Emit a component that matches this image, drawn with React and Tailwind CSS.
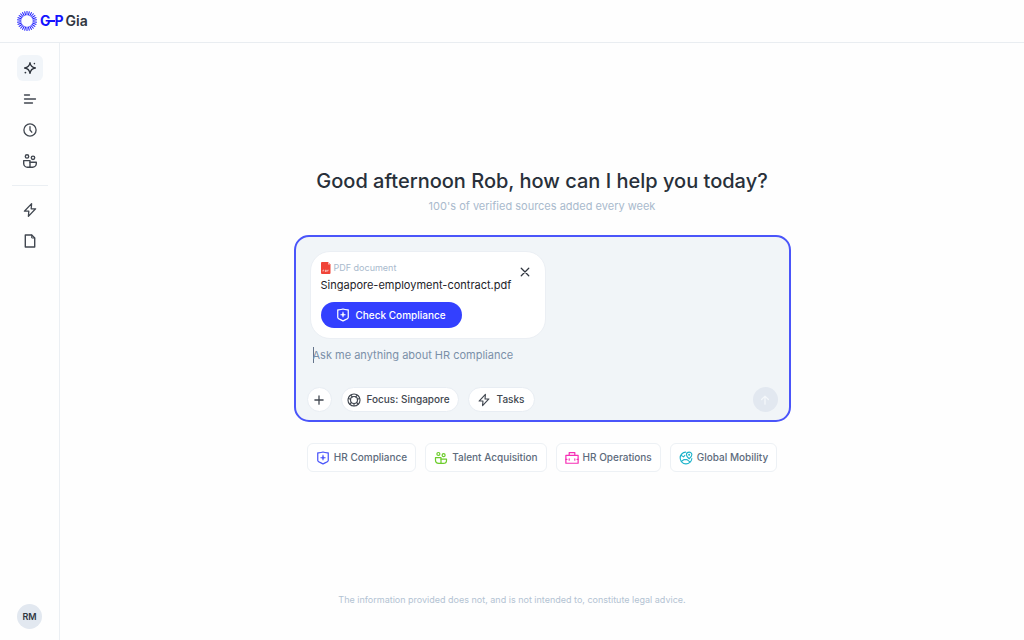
import { useState } from 'react'

const stroke = {
    fill: 'none',
    stroke: 'currentColor',
    strokeWidth: 1.5,
    strokeLinecap: 'round',
    strokeLinejoin: 'round',
    'aria-hidden': true,
}

function SparkIcon({ className }) {
    return (
        <svg viewBox="0 0 16 16" className={className} {...stroke} strokeWidth="1.3">
            <path d="M8 2.6C8.5 6 10 7.5 13.4 8C10 8.5 8.5 10 8 13.4C7.5 10 6 8.5 2.6 8C6 7.5 7.5 6 8 2.6Z" />
            <circle cx="12.4" cy="3.6" r=".8" fill="currentColor" stroke="none" />
            <circle cx="3.4" cy="12.6" r=".9" fill="currentColor" stroke="none" />
        </svg>
    )
}

function LinesIcon({ className }) {
    return (
        <svg viewBox="0 0 16 16" className={className} {...stroke} strokeWidth="1.3">
            <path d="M2.5 4h5M2.5 8h11M2.5 12h8" />
        </svg>
    )
}

function ClockIcon({ className }) {
    return (
        <svg viewBox="0 0 16 16" className={className} {...stroke} strokeWidth="1.3">
            <circle cx="8" cy="8" r="6.1" />
            <path d="M8 4.6V8l1.8 2.2" />
        </svg>
    )
}

function PeopleIcon({ className }) {
    return (
        <svg viewBox="0 0 16 16" className={className} {...stroke} strokeWidth="1.4">
            <circle cx="5" cy="3.4" r="1.7" />
            <circle cx="11" cy="4.8" r="1.7" />
            <path d="M8 7.6H1.7v2.8A3.8 3.8 0 0 0 5.5 14.2H8z" />
            <path d="M8 9.3h6.3v1.2a3.7 3.7 0 0 1-3.7 3.7H8" />
        </svg>
    )
}

function BoltIcon({ className }) {
    return (
        <svg viewBox="0 0 16 16" className={className} {...stroke} strokeWidth="1.3">
            <path d="M9.6 1.6L2.4 9.2h4.4L6.4 14.4l7.2-7.6H9.2z" />
        </svg>
    )
}

function FileIcon({ className }) {
    return (
        <svg viewBox="0 0 16 16" className={className} {...stroke} strokeWidth="1.4">
            <path d="M3.3 2h6.4l3 3v9H3.3z" />
            <path d="M9.7 2v3h3" strokeWidth="1" />
        </svg>
    )
}

function ShieldIcon({ className }) {
    return (
        <svg viewBox="0 0 16 16" className={className} {...stroke} strokeWidth="1.4">
            <path d="M8 1.2c-1.8.7-4 .9-6 .8v8.800c0 1.700 3 2.200 6 4 3-1.800 6-2.300 6-4V2c-2 .1-4.200-.1-6-.8z" />
            <path d="M8 4.800c.3 2 .9 2.600 2.900 2.900C8.900 8 8.300 8.600 8 10.600 7.700 8.600 7.100 8 5.100 7.700 7.100 7.400 7.700 6.800 8 4.800z" fill="currentColor" strokeWidth=".6" />
        </svg>
    )
}

function FocusIcon({ className }) {
    return (
        <svg viewBox="0 0 16 16" className={className} {...stroke} strokeWidth="1.3">
            <circle cx="8" cy="8" r="6.9" />
            <circle cx="8" cy="8" r="4" />
            <path d="M6.200 4.400L4.300 2.600M9.800 4.400l1.900-1.800M11.900 7.200l2.500-.9M10.900 10.800l1.700 2M8 12v2.500M5.100 10.800l-1.700 2M4.100 7.200l-2.500-.9" />
        </svg>
    )
}

function CaseIcon({ className }) {
    return (
        <svg viewBox="0 0 16 16" className={className} {...stroke} strokeWidth="1.4">
            <path d="M1 5h14v9H1zM4.800 5V1.800h6.400V5" />
            <path d="M1 9.600h1.200M13.800 9.600H15M4.800 8.800v1.700M11.200 8.800v1.700" strokeWidth="1.3" />
        </svg>
    )
}

function GlobeIcon({ className }) {
    return (
        <svg viewBox="0 0 16 16" className={className} {...stroke} strokeWidth="1.3">
            <path d="M7.600 1.300A6.700 6.700 0 1 0 14.700 8.600" />
            <path d="M11.600 8.900c-2-1.700-3.100-3-3.100-4.500a3.100 3.100 0 0 1 6.200 0c0 1.500-1.100 2.800-3.100 4.500z" />
            <circle cx="11.600" cy="4.300" r=".5" />
            <path d="M2.300 4.900l2.900 1.800 1.500-1.600M2.600 12l3.200-2.200h3.400l3.200 2.600" />
        </svg>
    )
}

function PdfIcon({ className }) {
    return (
        <svg viewBox="0 0 10 12" className={className} aria-hidden="true">
            <path d="M1 0h6l2.500 2.500V11a1 1 0 0 1-1 1H1a1 1 0 0 1-1-1V1a1 1 0 0 1 1-1z" fill="#f04438" />
            <path d="M7 0l2.500 2.500H7z" fill="#fbb4ae" />
            <path d="M2 9.500V8.200h1M4.300 9.500V8.200h1v1.300zM6.600 9.500V8.200h1" fill="none" stroke="#fff" strokeWidth=".6" />
        </svg>
    )
}

function PlusIcon({ className }) {
    return (
        <svg viewBox="0 0 16 16" className={className} {...stroke} strokeWidth="1.7">
            <path d="M8 2.500v11M2.500 8h11" />
        </svg>
    )
}

function CloseIcon({ className }) {
    return (
        <svg viewBox="0 0 16 16" className={className} {...stroke} strokeWidth="1.7">
            <path d="M3 3l10 10M13 3L3 13" />
        </svg>
    )
}

function ArrowUpIcon({ className }) {
    return (
        <svg viewBox="0 0 16 16" className={className} {...stroke} strokeWidth="1.7">
            <path d="M8 13.500V3M3.500 7.300L8 2.800l4.500 4.500" />
        </svg>
    )
}

const ticks = Array.from({ length: 26 }, (_, i) => (i * 360) / 26)

function Logo() {
    return (
        <a href="#" aria-label="G-P Gia" className="flex items-center text-sm font-bold leading-5">
            <svg viewBox="0 0 20 20" className="mr-[3px] size-5" aria-hidden="true">
                {ticks.map((deg) => (
                    <path
                        key={deg}
                        d="M10 0V4.300"
                        stroke="#1c1cff"
                        strokeWidth="1"
                        transform={`rotate(${deg} 10 10)`}
                    />
                ))}
            </svg>
            <span className="text-[#1414ff]">G</span>
            <span className="-ml-0.5 h-0.5 w-1.5 bg-[#1414ff]" />
            <span className="text-[#1414ff]">P</span>
            <span className="ml-0.5 font-semibold text-[#30363f]">Gia</span>
        </a>
    )
}

const mainNav = [
    { label: 'New chat', Icon: SparkIcon },
    { label: 'History', Icon: LinesIcon },
    { label: 'Recent', Icon: ClockIcon },
    { label: 'People', Icon: PeopleIcon },
]

const toolNav = [
    { label: 'Tasks', Icon: BoltIcon },
    { label: 'Documents', Icon: FileIcon },
]

function NavButton({ label, Icon, active }) {
    return (
        <button
            type="button"
            aria-label={label}
            className={
                active
                    ? 'flex size-[26px] items-center justify-center rounded-md bg-[#f1f5f9] text-[#30363f]'
                    : 'flex size-[26px] items-center justify-center rounded-md text-[#414750]'
            }
        >
            <Icon className="size-4" />
        </button>
    )
}

function Sidebar() {
    return (
        <nav className="flex w-[60px] shrink-0 flex-col items-center border-r border-[#ebeff3] pt-3 pb-[11px]">
            <div className="flex flex-col gap-[5px]">
                {mainNav.map((item, i) => (
                    <NavButton key={item.label} {...item} active={i === 0} />
                ))}
            </div>
            <hr className="my-[11px] w-9 border-[#ebeff3]" />
            <div className="flex flex-col gap-[5px]">
                {toolNav.map((item) => (
                    <NavButton key={item.label} {...item} />
                ))}
            </div>
            <button
                type="button"
                className="mt-auto size-[25px] rounded-full bg-[#e2e8f0] text-[9px] font-semibold text-[#30363f]"
            >
                RM
            </button>
        </nav>
    )
}

function Attachment({ onRemove }) {
    return (
        <div className="mx-[3px] w-[236px] rounded-[20px] border border-[#ebeff4] bg-white p-2.5">
            <div className="flex items-start justify-between">
                <div>
                    <div className="flex items-center gap-[3px] text-[9px] leading-3 text-[#a9bacd]">
                        <PdfIcon className="h-3 w-2.5" />
                        PDF document
                    </div>
                    <div className="mt-[3px] text-[11px] leading-4 text-[#1d2229]">Singapore-employment-contract.pdf</div>
                </div>
                <button type="button" aria-label="Remove file" onClick={onRemove} className="mt-1 mr-1 text-[#30363f]">
                    <CloseIcon className="size-3" />
                </button>
            </div>
            <button
                type="button"
                className="mt-[9px] flex h-[26px] items-center gap-1.5 rounded-full bg-[#3340ff] pl-[15px] pr-4 text-[10px] font-medium text-white"
            >
                <ShieldIcon className="size-3.5" />
                Check Compliance
            </button>
        </div>
    )
}

const pill = 'flex h-[25px] items-center gap-1.5 rounded-full border border-[#e8edf3] bg-white text-[10px] font-medium text-[#414750]'

function Composer() {
    const [message, setMessage] = useState('')
    const [attached, setAttached] = useState(true)

    return (
        <form
            onSubmit={(e) => e.preventDefault()}
            className="mt-[21px] w-full max-w-[497px] rounded-[15px] border-2 border-[#4a55fa] bg-[#f1f5f8] px-[11px] pt-3.5 pb-2"
        >
            {attached && <Attachment onRemove={() => setAttached(false)} />}
            <div className="mt-2 ml-1.5 flex">
                {!message && <span className="-mr-px h-4 w-px bg-[#64748b]" />}
                <textarea
                    aria-label="Message"
                    rows={2}
                    value={message}
                    onChange={(e) => setMessage(e.target.value)}
                    placeholder="Ask me anything about HR compliance"
                    className="block h-10 w-full resize-none bg-transparent text-[11px] leading-4 text-[#30363f] outline-none placeholder:text-[#7b90a8]"
                />
            </div>
            <div className="flex items-center gap-[9px]">
                <button
                    type="button"
                    aria-label="Add"
                    className="flex size-[25px] items-center justify-center rounded-full border border-[#e8edf3] bg-white text-[#414750]"
                >
                    <PlusIcon className="size-3" />
                </button>
                <button type="button" className={`${pill} pl-[5px] pr-2`}>
                    <FocusIcon className="size-3.5" />
                    Focus: Singapore
                </button>
                <button type="button" className={`${pill} pl-2 pr-2.5`}>
                    <BoltIcon className="size-3.5" />
                    Tasks
                </button>
                <button
                    type="submit"
                    aria-label="Send"
                    className="ml-auto flex size-[25px] items-center justify-center rounded-full bg-[#e2e8f0] text-[#f4f7fa]"
                >
                    <ArrowUpIcon className="size-3" />
                </button>
            </div>
        </form>
    )
}

const topics = [
    { label: 'HR Compliance', Icon: ShieldIcon, color: 'text-[#4a55fa]' },
    { label: 'Talent Acquisition', Icon: PeopleIcon, color: 'text-[#6ccc2b]' },
    { label: 'HR Operations', Icon: CaseIcon, color: 'text-[#f62fb5]' },
    { label: 'Global Mobility', Icon: GlobeIcon, color: 'text-[#20b4cb]' },
]

function App() {
    return (
        <div className="flex min-h-screen flex-col bg-[#fefefe] font-[Inter,sans-serif]">
            <header className="flex h-[43px] items-center border-b border-[#e9edf1] px-[17px]">
                <Logo />
            </header>
            <div className="flex flex-1">
                <Sidebar />
                <main className="flex flex-1 flex-col items-center px-4 pt-[124px]">
                    <h1 className="text-xl leading-7 font-medium text-[#28303a]">
                        Good afternoon Rob, how can I help you today?
                    </h1>
                    <p className="mt-[3px] text-[11px] leading-4 text-[#a9bacd]">100's of verified sources added every week</p>
                    <Composer />
                    <div className="mt-[21px] flex flex-wrap justify-center gap-[9px]">
                        {topics.map(({ label, Icon, color }) => (
                            <button
                                key={label}
                                type="button"
                                className="flex h-[29px] items-center gap-1 rounded-md border border-[#edf1f5] bg-white px-2 text-[10px] font-medium text-[#5d6b7c]"
                            >
                                <Icon className={`size-3.5 ${color}`} />
                                {label}
                            </button>
                        ))}
                    </div>
                    <p className="mt-auto pr-[60px] pb-[34px] text-[9px] leading-3 text-[#b3c3d3]">
                        The information provided does not, and is not intended to, constitute legal advice.
                    </p>
                </main>
            </div>
        </div>
    )
}

export default App
